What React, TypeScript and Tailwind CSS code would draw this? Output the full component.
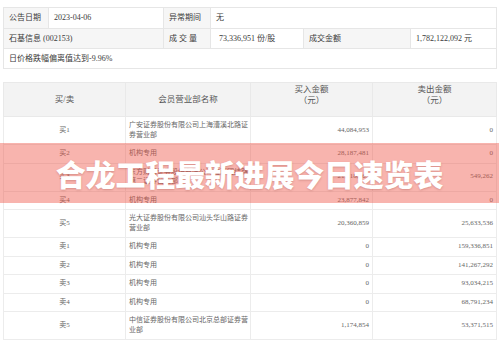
import React from "react";

const rows: { side: string; name: string[]; buy: string; sell: string }[] = [
  { side: "买1", name: ["广安证券股份有限公司上海漕溪北路证", "券营业部"], buy: "44,084,953", sell: "0" },
  { side: "买2", name: ["机构专用"], buy: "28,187,481", sell: "0" },
  { side: "买3", name: ["东方财富证券股份有限公司拉萨团结路", "第二证券营业部"], buy: "21,218,565", sell: "549,262" },
  { side: "买4", name: ["机构专用"], buy: "23,877,842", sell: "0" },
  { side: "买5", name: ["光大证券股份有限公司汕头华山路证券", "营业部"], buy: "20,360,859", sell: "25,633,536" },
  { side: "卖1", name: ["机构专用"], buy: "0", sell: "159,336,851" },
  { side: "卖2", name: ["机构专用"], buy: "0", sell: "141,267,292" },
  { side: "卖3", name: ["机构专用"], buy: "0", sell: "93,034,215" },
  { side: "卖4", name: ["机构专用"], buy: "0", sell: "68,791,234" },
  { side: "卖5", name: ["中信证券股份有限公司北京总部证券营", "业部"], buy: "1,174,854", sell: "53,371,515" },
];

export default function App() {
  const lab = "border border-[#e6e6e6] bg-[#f6f6f6] pl-[5px] h-[20px] whitespace-nowrap";
  const val = "border border-[#e6e6e6] bg-white pl-[5px] h-[20px] whitespace-nowrap";
  const th = "border border-[#e9e9e9] bg-[#f3f3f3] font-normal text-[8.5px] text-[#555] leading-[11px] text-center";
  const td = "border border-[#ececec] text-[7px] leading-[9.5px] py-[4px] text-[#666]";
  return (
    <div className="relative w-[499px] h-[345px] bg-white overflow-hidden font-['Liberation_Serif','Noto_Sans_CJK_SC',serif]">
      <div className="pt-[7px] px-[3px]">
        <table className="w-[493px] table-fixed border-collapse text-[8px] text-[#3a3a3a]">
          <colgroup>
            <col className="w-[45px]" />
            <col className="w-[115px]" />
            <col className="w-[47px]" />
            <col className="w-[93px]" />
            <col className="w-[107px]" />
            <col className="w-[86px]" />
          </colgroup>
          <tbody>
            <tr>
              <td className={lab + " h-[21px]"}>公告日期</td>
              <td className={val + " h-[21px]"}>2023-04-06</td>
              <td className={lab + " h-[21px]"}>异常期间</td>
              <td className={val + " h-[21px]"} colSpan={3}>无</td>
            </tr>
            <tr>
              <td className={lab} colSpan={2}>石基信息 (002153)</td>
              <td className={lab}>成 交 量</td>
              <td className={val + " pl-[8px]"}>73,336,951 份/股</td>
              <td className={lab}>成交金额</td>
              <td className={val}>1,782,122,092 元</td>
            </tr>
            <tr>
              <td className={val} colSpan={6}>日价格跌幅偏离值达到-9.96%</td>
            </tr>
          </tbody>
        </table>

        <table className="mt-[13px] w-[493px] table-fixed border-collapse">
          <colgroup>
            <col className="w-[122px]" />
            <col className="w-[125px]" />
            <col className="w-[122px]" />
            <col className="w-[124px]" />
          </colgroup>
          <thead>
            <tr className="h-[34px]">
              <th className={th + " align-middle"}>买/卖</th>
              <th className={th + " align-middle"}>会员营业部名称</th>
              <th className={th + " align-top pt-[1px]"}>
                买入金额
                <br />
                （元）
              </th>
              <th className={th + " align-top pt-[1px]"}>
                卖出金额
                <br />
                （元）
              </th>
            </tr>
          </thead>
          <tbody>
            {rows.map((r) => (
              <tr key={r.side}>
                <td className={td + " text-center"}>{r.side}</td>
                <td className={td + " pl-[3px] pr-[1px] text-[#555] whitespace-nowrap"}>
                  {r.name.map((n, i) => (
                    <div key={i}>{n}</div>
                  ))}
                </td>
                <td className={td + " text-right pr-[3px]"}>{r.buy}</td>
                <td className={td + " text-right pr-[3px]"}>{r.sell}</td>
              </tr>
            ))}
          </tbody>
        </table>
      </div>

      <div className="absolute left-0 top-[143px] w-[499px] h-[60px] bg-[rgba(240,85,70,0.44)] flex items-center justify-center">
        <span className="text-white text-[30px] font-black leading-none tracking-[-0.2px] font-['Noto_Sans_CJK_SC',sans-serif] [text-shadow:0_1px_2px_rgba(120,40,30,0.25)]">
          合龙工程最新进展今日速览表
        </span>
      </div>
    </div>
  );
}
